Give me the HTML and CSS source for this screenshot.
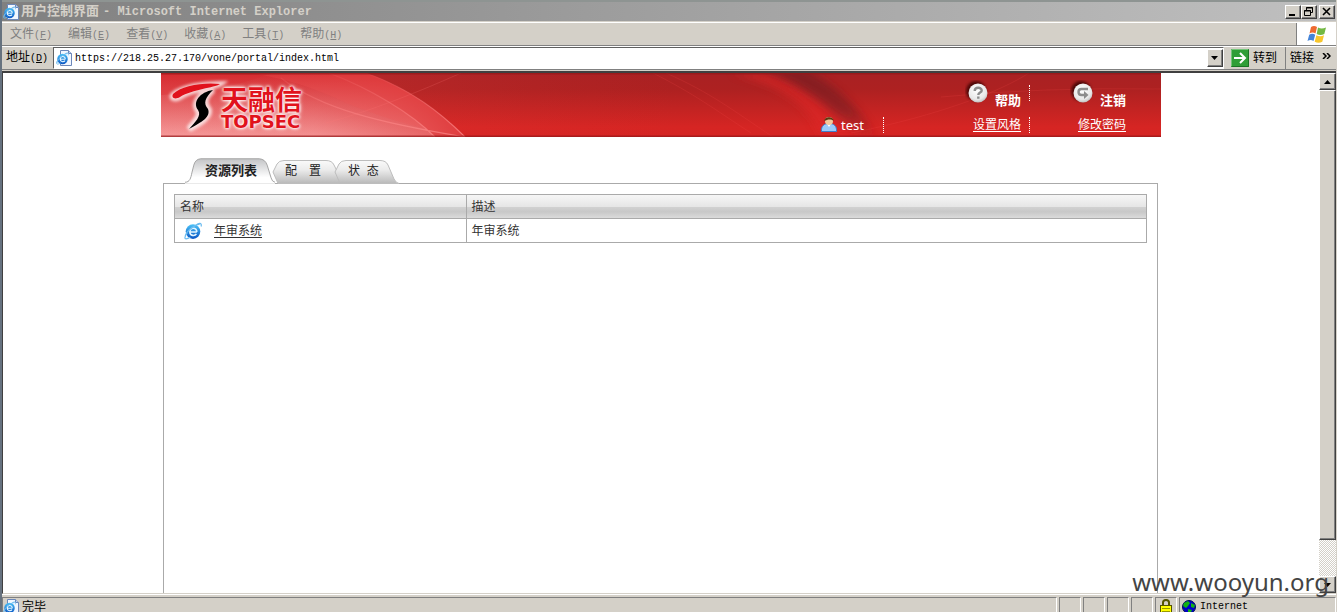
FILE: index.html
```html
<!DOCTYPE html>
<html lang="zh-CN">
<head>
<meta charset="utf-8">
<title>用户控制界面</title>
<link rel="stylesheet" href="styles.css">
</head>
<body>
<svg class="defs" aria-hidden="true">
  <defs>
    <linearGradient id="ieBlue" x1="0" y1="0" x2="0" y2="1"><stop offset="0" stop-color="#4cc3f7"/><stop offset="1" stop-color="#0a55c4"/></linearGradient>
    <symbol id="ie" viewBox="0 0 16 16">
      <circle cx="8" cy="8.500" r="6.500" fill="url(#ieBlue)"/>
      <path d="M11.400 8.900H5.300M11.400 8.900C11.400 4.300 5.200 4.600 5.200 8.900c0 3.700 4.600 3.700 5.800 1.700" fill="none" stroke="#e4f5ff" stroke-width="1.400"/>
      <path d="M10.500 2.800C13.500.6 16 .6 15.200 4M3 9.500C-1 15 .8 16.200 5.600 13.600M1 13.500C1 9 9 2.500 14 1.800" fill="none" stroke="#6bbcf0" stroke-width="1.100"/>
    </symbol>
    <symbol id="page" viewBox="0 0 16 16">
      <path d="M4.500.5h8l3 3v12h-11z" fill="#f2f7ff" stroke="#6c87b9"/>
      <path d="M12.500.5v3h3" fill="#bcd2f4" stroke="#6c87b9"/>
      <svg x="0" y="2" width="13" height="13"><use href="#ie"/></svg>
    </symbol>
    <radialGradient id="knob" cx=".45" cy=".35" r=".7"><stop offset="0" stop-color="#fff"/><stop offset=".7" stop-color="#e8e8e8"/><stop offset="1" stop-color="#b5b5b5"/></radialGradient>
    <filter id="soft" x="-50%" y="-50%" width="200%" height="200%"><feGaussianBlur stdDeviation="1.500"/></filter>
    <linearGradient id="tabOn" x1="0" y1="0" x2="0" y2="1"><stop offset="0" stop-color="#c3c4c6"/><stop offset=".75" stop-color="#fff"/></linearGradient>
    <linearGradient id="tabOff" x1="0" y1="0" x2="0" y2="1"><stop offset="0" stop-color="#fafafa"/><stop offset=".4" stop-color="#ececec"/><stop offset="1" stop-color="#b9b9b9"/></linearGradient>
  </defs>
</svg>
<div class="window">
  <header class="titlebar">
    <svg class="icon16"><use href="#page"/></svg>
    <h1 class="title">用户控制界面<span class="title-app">- Microsoft Internet Explorer</span></h1>
    <div class="controls">
      <button class="raised ctl" aria-label="最小化"><svg width="12" height="10"><path d="M2 8h6" stroke="#000" stroke-width="2"/></svg></button>
      <button class="raised ctl" aria-label="还原"><svg width="12" height="10"><path d="M3.500 3V.5h6v5H8M3 1h7M1.500 3.500h6v5h-6zM1 4h7" fill="none" stroke="#000"/></svg></button>
      <button class="raised ctl ctl-close" aria-label="关闭"><svg width="12" height="10"><path d="M2 1l7 7M9 1L2 8" stroke="#000" stroke-width="1.600"/></svg></button>
    </div>
  </header>
  <div class="menurow">
    <nav class="menu">
      <button>文件<span class="mono">(<u>F</u>)</span></button>
      <button>编辑<span class="mono">(<u>E</u>)</span></button>
      <button>查看<span class="mono">(<u>V</u>)</span></button>
      <button>收藏<span class="mono">(<u>A</u>)</span></button>
      <button>工具<span class="mono">(<u>T</u>)</span></button>
      <button>帮助<span class="mono">(<u>H</u>)</span></button>
    </nav>
    <div class="throbber">
      <svg width="20" height="19" viewBox="0 0 20 19">
        <path d="M4 2c2-1.500 4-1.500 6 0L8.500 8.500c-2-1.300-4-1.300-6 0z" fill="#ee6a30"/>
        <path d="M11 2.600c2.500 1.300 5 1.200 8 0L17.300 9c-2.600 1.200-5 1.300-7.600 0z" fill="#73b843"/>
        <path d="M2.200 9.700c2-1.400 4-1.400 6 0L6.500 16c-2-1.300-4-1.300-6 0z" fill="#4484d8"/>
        <path d="M9.400 10.300c2.500 1.300 5 1.200 7.600 0l-1.700 6.400c-2.600 1.300-5 1.300-7.600 0z" fill="#f8c62c"/>
      </svg>
    </div>
  </div>
  <form class="addressrow">
    <label for="url">地址<span class="mono">(<u>D</u>)</span></label>
    <div class="field">
      <svg class="icon16"><use href="#page"/></svg>
      <input id="url" class="mono" type="text" value="https://218.25.27.170/vone/portal/index.html">
      <button type="button" class="raised drop" aria-label="展开"><svg width="8" height="4"><path d="M0 0h7L3.500 4z"/></svg></button>
    </div>
    <button type="button" class="go">
      <svg width="18" height="18" viewBox="0 0 18 18"><rect width="18" height="18" fill="#2f9e37"/><path d="M.5 17.500V.5h17" fill="none" stroke="#72c477"/><path d="M.5 17.500h17V.5" fill="none" stroke="#1a7524"/><path d="M3 9h11M9 4l5 5-5 5" fill="none" stroke="#fff" stroke-width="2"/></svg>
      转到
    </button>
    <div class="links"><span>链接</span><svg width="9" height="6"><path d="M1 0l3 3-3 3M5 0l3 3-3 3" fill="none" stroke="#000" stroke-width="1.500"/></svg></div>
  </form>

  <div class="viewport">
    <main class="page">
      <div class="banner">
        <svg class="banner-art" viewBox="0 0 1000 64" preserveAspectRatio="none" aria-hidden="true">
          <defs>
            <linearGradient id="red" x1="0" y1="0" x2="0" y2="1"><stop offset="0" stop-color="#a92123"/><stop offset=".25" stop-color="#ad2121"/><stop offset=".85" stop-color="#d62523"/><stop offset="1" stop-color="#d42423"/></linearGradient>
            <linearGradient id="pinkV" x1="0" y1="0" x2="0" y2="1"><stop offset="0" stop-color="#d42a2e"/><stop offset="1" stop-color="#f7a0a0"/></linearGradient>
            <linearGradient id="pinkH" x1="0" y1="0" x2="1" y2="0"><stop offset="0" stop-color="#e64a4c" stop-opacity=".1"/><stop offset=".5" stop-color="#dd3a3c" stop-opacity=".2"/><stop offset="1" stop-color="#d82a2c" stop-opacity=".9"/></linearGradient>
            <linearGradient id="mid" x1="0" y1="0" x2="1" y2="0"><stop offset="0" stop-color="#f05050" stop-opacity=".3"/><stop offset="1" stop-color="#e03030" stop-opacity="0"/></linearGradient>
            <filter id="b3" x="-30%" y="-30%" width="160%" height="160%"><feGaussianBlur stdDeviation="4"/></filter>
            <linearGradient id="shade" x1="0" y1="0" x2="0" y2="1"><stop offset="0" stop-color="#6f1e24"/><stop offset=".6" stop-color="#6f1e24"/><stop offset="1" stop-color="#6f1e24" stop-opacity=".1"/></linearGradient>
            <linearGradient id="edge" x1="0" y1="0" x2="0" y2="1"><stop offset="0" stop-color="#ff8080" stop-opacity=".1"/><stop offset="1" stop-color="#ff8c8c" stop-opacity=".7"/></linearGradient>
          </defs>
          <rect width="1000" height="64" fill="url(#red)"/>
          <path d="M570 0C620 12 650 34 660 64H710C690 36 640 8 600 0z" fill="#df2725" opacity=".6" filter="url(#b3)"/>
          <path d="M600 -6H640C670 8 700 36 716 64H696C672 36 640 12 600 -6z" fill="url(#shade)" opacity=".6" filter="url(#b3)"/>
          <path d="M200 0H520V64H200z" fill="url(#mid)" opacity=".5"/>
          <path d="M0 0H205C250 16 280 40 304 64H0z" fill="url(#pinkV)"/>
          <path d="M0 0H205C250 16 280 40 304 64H0z" fill="url(#pinkH)"/>
          <path d="M0 0H168C210 16 250 40 274 64H0z" fill="url(#pinkV)" opacity=".35"/>
          <path d="M205 0C250 16 280 40 304 64C260 56 215 44 172 24C145 12 120 5 90 0z" fill="#ee5555" opacity=".25"/>
          <path d="M168 0C210 16 250 40 274 64M205 0C250 16 280 40 304 64M120 5C160 36 220 50 304 64" fill="none" stroke="url(#edge)" stroke-width="1.200"/>
          <path d="M0 22C40 20 80 12 110 0H0z" fill="#d92b32" opacity=".35"/>
          <path d="M165 50C210 38 260 18 300 0" fill="none" stroke="#f77" opacity=".2"/>
          <path d="M492 0C535 22 550 34 590 60M505 0C550 20 570 36 612 64M690 60C780 42 840 18 868 0M780 24Q880 14 1000 16" fill="none" stroke="#ef4444" opacity=".2"/>
          <path d="M0 .5H1000M0 63.500H1000" stroke="#951719" stroke-width="2" opacity=".7"/>
        </svg>
        <div class="logo">
          <svg width="50" height="52" viewBox="0 0 50 52" aria-hidden="true">
            <g stroke="#fff" fill="#fff" stroke-width="6" opacity=".75" filter="url(#soft)"><path d="M2 16C12 8 32 5 49 5 44 9 20 9 9 18 4 21 0 19 2 16z"/><path d="M42 11C33 19 33 24 38 31 39 38 30 44 18 50 23 43 31 37 27 32 21 23 29 14 42 11z"/></g>
            <path d="M2 15C10 7 32 3 49 5 43 9 22 10 9 18 4 21 0 19 2 15z" fill="#e1121c"/>
            <path d="M42 11C34 19 32 24 37 30 40 38 31 43 18 50 24 43 31 37 27 31 21 23 29 13 42 11z"/>
          </svg>
          <div class="logo-text"><span class="logo-cn">天融信</span><span class="logo-en">TOPSEC</span></div>
        </div>
        <div class="account">
          <div class="user">
            <svg width="18" height="18" viewBox="0 0 18 18" aria-hidden="true"><path d="M1.500 16.500C1 11 4 8.500 9 8.500s8 2.500 7.500 8z" fill="#9dcbf8" stroke="#3f7cc8"/><path d="M7 9l2 3 2-3z" fill="#fff"/><circle cx="9" cy="6" r="4" fill="#f4c99c"/><path d="M4.500 6C4 1 14 1 13.500 6 11 3.500 7 4.500 4.500 6z" fill="#5b3b12"/></svg>
            test
          </div>
          <div class="acts">
            <a class="act" href="#"><svg width="26" height="26" viewBox="0 0 26 26" aria-hidden="true"><circle cx="11" cy="11" r="10" fill="#300" opacity=".8" filter="url(#soft)"/><circle cx="13" cy="13" r="9.500" fill="url(#knob)"/><path d="M9.700 11c0-4.200 7-4.200 7-.5 0 2.200-3.400 2-3.400 4.500M13.300 16.500v2.300" fill="none" stroke="#8c8c8c" stroke-width="2.400"/></svg><b>帮助</b></a>
            <a class="sub" href="#">设置风格</a>
          </div>
          <div class="acts">
            <a class="act" href="#"><svg width="26" height="26" viewBox="0 0 26 26" aria-hidden="true"><circle cx="11" cy="11" r="10" fill="#300" opacity=".8" filter="url(#soft)"/><circle cx="13" cy="13" r="9.500" fill="url(#knob)"/><path d="M18 9H11.500c-4 0-4 6 0 6H15" fill="none" stroke="#8c8c8c" stroke-width="2.400"/><path d="M14 11l4.500 4L14 19z" fill="#8c8c8c"/></svg><b>注销</b></a>
            <a class="sub" href="#">修改密码</a>
          </div>
        </div>
      </div>

      <section class="content">
        <div class="tabs" role="tablist">
          <button class="tab tab-on" role="tab" aria-selected="true"><svg width="90" height="26" viewBox="0 0 92 26" aria-hidden="true"><path d="M0 24.500C5 24.500 6 20 7 15L9 7Q10.500 1 16 .5H76Q82 1 84 7L88 20Q89 24 92 24.500V26H0z" fill="url(#tabOn)"/><path d="M0 24.500C5 24.500 6 20 7 15L9 7Q10.500 1 16 .5H76Q82 1 84 7L88 20Q89 24 92 24.500" fill="none" stroke="#a3a3a3"/></svg><span>资源列表</span></button>
          <button class="tab tab-mid" role="tab" aria-selected="false"><svg width="76" height="24" viewBox="0 0 76 24" aria-hidden="true"><path d="M1 12L5 4Q7 .5 12 .5H54Q60 .5 62 5L69 19Q71 23 75 23.500H6z" fill="url(#tabOff)" stroke="#bdbdbd"/></svg><span>配　置</span></button>
          <button class="tab tab-last" role="tab" aria-selected="false"><svg width="66" height="24" viewBox="0 0 66 24" aria-hidden="true"><path d="M1 12L5 4Q7 .5 12 .5H46Q52 .5 54 5L60 19Q62 23 65 23.500H6z" fill="url(#tabOff)" stroke="#bdbdbd"/></svg><span>状 &nbsp;态</span></button>
        </div>
        <div class="panel">
          <table class="list">
            <colgroup><col class="col-name"><col></colgroup>
            <thead><tr><th>名称</th><th>描述</th></tr></thead>
            <tbody><tr><td><a class="resource" href="#"><svg class="icon18"><use href="#ie"/></svg><span>年审系统</span></a></td><td>年审系统</td></tr></tbody>
          </table>
        </div>
      </section>
    </main>
    <div class="scroll">
      <button class="raised arrow" aria-label="向上"><svg width="8" height="4"><path d="M0 4h7L3.500 0z"/></svg></button>
      <div class="raised thumb"></div>
      <div class="track"></div>
      <button class="raised arrow" aria-label="向下"><svg width="8" height="4"><path d="M0 0h7L3.500 4z"/></svg></button>
    </div>
  </div>

  <footer class="status">
    <div class="cell cell-main"><svg class="icon16"><use href="#page"/></svg>完毕</div>
    <div class="cell"></div><div class="cell"></div><div class="cell"></div><div class="cell"></div>
    <div class="cell"><svg width="14" height="15" viewBox="0 0 14 15"><path d="M4 7V3.500Q4 1 7 1t3 2.500V7" fill="none" stroke="#555500" stroke-width="2"/><rect x="1.500" y="6.500" width="11" height="8" fill="#ff0" stroke="#555500"/><path d="M3 9.500h8M3 12.500h8" stroke="#999900"/></svg></div>
    <div class="cell cell-zone"><svg width="14" height="14" viewBox="0 0 14 14"><circle cx="7" cy="7" r="6.500" fill="#0000c8" stroke="#001050"/><path d="M2 3l4-2 2 2-2 3-2 2-3-2zM9 3l4 2-1 3-3-1zM6 9l4 1-2 4-2-2z" fill="#12b312"/></svg><span class="mono">Internet</span></div>
  </footer>
</div>
<div class="watermark">www.wooyun.org</div>
</body>
</html>
```
FILE: styles.css
```css
* { box-sizing: border-box; }
body {
  margin: 0;
  overflow: hidden;
  background: #d4d0c8;
  color: #000;
  font: 12px/16px "Liberation Sans", "Noto Sans CJK SC", sans-serif;
}
button, input { font: inherit; color: inherit; }
button { padding: 0; border: 0; background: none; }
svg { display: block; flex: none; }
.defs { position: absolute; width: 0; height: 0; }
.mono { font-family: "Liberation Mono", monospace; font-size: 10px; }
.icon16 { width: 16px; height: 16px; }
.icon18 { width: 18px; height: 18px; }

.window {
  display: flex;
  flex-direction: column;
  height: 100vh;
  border-left: 2px solid #66727f;
  border-right: 1px solid #d4d0c8;
}
.raised {
  display: flex;
  align-items: center;
  justify-content: center;
  flex: none;
  background: #d4d0c8;
  border: 1px solid;
  border-color: #fff #404040 #404040 #fff;
  box-shadow: inset -1px -1px #808080;
}

.titlebar {
  display: flex;
  align-items: center;
  flex: none;
  height: 22px;
  padding: 0 1px;
  border-top: 2px solid #8e9492;
  border-bottom: 1px solid #d4d0c8;
  background: linear-gradient(90deg, #808080, #c0c0c0);
  color: #d4d0c8;
}
.title { margin: 0 0 0 2px; font-size: 13px; line-height: 18px; white-space: nowrap; }
.title-app { margin-left: 4px; font-family: "Liberation Mono", monospace; font-size: 12px; }
.controls { display: flex; margin-left: auto; color: #000; }
.ctl { width: 16px; height: 14px; }
.ctl-close { margin-left: 2px; }

.menurow {
  display: flex;
  flex: none;
  height: 24px;
  border-top: 1px solid #fff;
  border-bottom: 1px solid #808080;
}
.menu { display: flex; align-items: center; gap: 16px; padding: 2px 0 0 8px; color: #808080; }
.throbber {
  display: flex;
  align-items: center;
  justify-content: center;
  width: 40px;
  margin-left: auto;
  border-left: 1px solid #808080;
  background: #fff;
}

.addressrow {
  display: flex;
  align-items: center;
  flex: none;
  height: 24px;
  padding-left: 4px;
  border-top: 1px solid #fff;
  border-bottom: 1px solid #808080;
}
.field {
  display: flex;
  align-items: center;
  flex: 1;
  height: 22px;
  margin-left: 5px;
  padding-left: 2px;
  border: 1px solid;
  border-color: #606060 #fff #fff #606060;
  background: #fff;
}
.field input { flex: 1; min-width: 0; padding: 2px 0 0 3px; border: 0; outline: 0; background: none; }
.drop { width: 16px; height: 18px; }
.go { display: flex; align-items: center; gap: 4px; padding: 0 8px 0 7px; }
.links {
  display: flex;
  align-items: center;
  gap: 8px;
  height: 22px;
  padding: 0 5px 0 4px;
  border-left: 1px solid #808080;
}
.links svg { margin-bottom: 4px; }

.viewport {
  display: flex;
  flex: 1;
  min-height: 0;
  margin-top: 1px;
  border-top: 2px solid #404040;
  border-left: 1px solid #404040;
  border-bottom: 1px solid #d4d0c8;
  background: #fff;
}
.page {
  display: flex;
  flex: 1;
  flex-direction: column;
  align-items: center;
  min-width: 0;
  color: #333;
}
.scroll { display: flex; flex-direction: column; flex: none; width: 17px; }
.arrow { height: 17px; }
.thumb { flex: 452; }
.track { flex: 36; background: repeating-conic-gradient(#fff 0 25%, #d4d0c8 0 50%) 0 0 / 2px 2px; }

.banner {
  position: relative;
  display: flex;
  justify-content: space-between;
  width: 100%;
  max-width: 1000px;
  height: 64px;
  color: #fff;
}
.banner-art { position: absolute; width: 100%; height: 100%; }
.logo, .account { position: relative; display: flex; }
.logo { padding: 6px 0 0 10px; }
.logo svg { overflow: visible; }
.logo-text {
  display: flex;
  flex-direction: column;
  position: relative;
  padding-top: 4px;
  color: #e1121c;
  text-shadow: 0 0 3px #fff, 0 0 3px #fff, 0 0 5px #fff;
}
.logo-cn { font: bold 27px/32px "Noto Sans CJK SC", sans-serif; }
.logo-en { font: bold 18px/14px "DejaVu Sans", sans-serif; }
.account { padding-right: 35px; }
.user {
  display: flex;
  align-items: center;
  align-self: flex-end;
  gap: 3px;
  height: 16px;
  margin-bottom: 4px;
  padding-right: 19px;
  border-right: 1px dotted #fff;
  font: 13px/16px "Noto Sans", sans-serif;
}
.user svg { margin-bottom: 2px; }
.acts { display: flex; flex-direction: column; align-items: flex-end; justify-content: space-between; padding: 12px 0 4px; }
.acts:nth-child(2) { width: 146px; }
.acts:nth-child(3) { width: 96px; }
.acts a { color: #fff; }
.acts:nth-child(2) a { padding-right: 8px; border-right: 1px dotted #fff; }
.act { display: flex; align-items: flex-start; gap: 4px; height: 16px; text-decoration: none; }
.act svg { margin-top: -5px; }
.act b { margin-top: 8px; font-size: 13px; line-height: 16px; }
.sub { height: 16px; text-underline-offset: 2px; }

.content { display: flex; flex: 1; flex-direction: column; width: 100%; max-width: 1000px; padding: 22px 3px 0 2px; }
.tabs { display: flex; align-items: flex-end; padding-left: 22px; }
.tab { position: relative; height: 24px; color: #222; }
.tab svg { position: absolute; left: 0; bottom: -1px; }
.tab span { position: relative; }
.tab-on { z-index: 3; width: 87px; font-size: 13px; font-weight: bold; padding-left: 5px; }
.tab-mid { z-index: 1; width: 62px; }
.tab-last { z-index: 2; width: 66px; text-align: left; padding-left: 14px; }
.panel { position: relative; flex: 1; padding: 10px; border: 1px solid #aaa; border-bottom: 0; }
.list { width: 100%; border-collapse: collapse; table-layout: fixed; }
.col-name { width: 30%; }
.list th, .list td { height: 24px; padding: 0 5px; border: 1px solid #aaa; text-align: left; font-weight: normal; }
.list thead tr { background: linear-gradient(#f6f6f6, #e6e6e6 48%, #d0d0d0 52%, #c8c8c8 70%, #dedede); }
.resource { display: flex; align-items: center; gap: 12px; padding-left: 4px; color: #333; text-decoration: none; }
.resource span { text-decoration: underline; text-underline-offset: 2px; }

.status { display: flex; flex: none; gap: 2px; height: 18px; padding-top: 2px; border-top: 1px solid #fff; overflow: hidden; }
.cell {
  display: flex;
  align-items: center;
  justify-content: center;
  width: 22px;
  height: 19px;
  border: 1px solid #fff;
  border-top-color: #808080;
  border-left-color: #808080;
}
.cell-main { flex: 1; justify-content: flex-start; gap: 3px; }
.cell-zone { justify-content: flex-start; gap: 4px; width: 157px; padding-left: 2px; }
.watermark {
  position: absolute;
  right: 8px;
  bottom: 14px;
  color: #444;
  font: 24px/32px "Noto Sans", sans-serif;
}
```
